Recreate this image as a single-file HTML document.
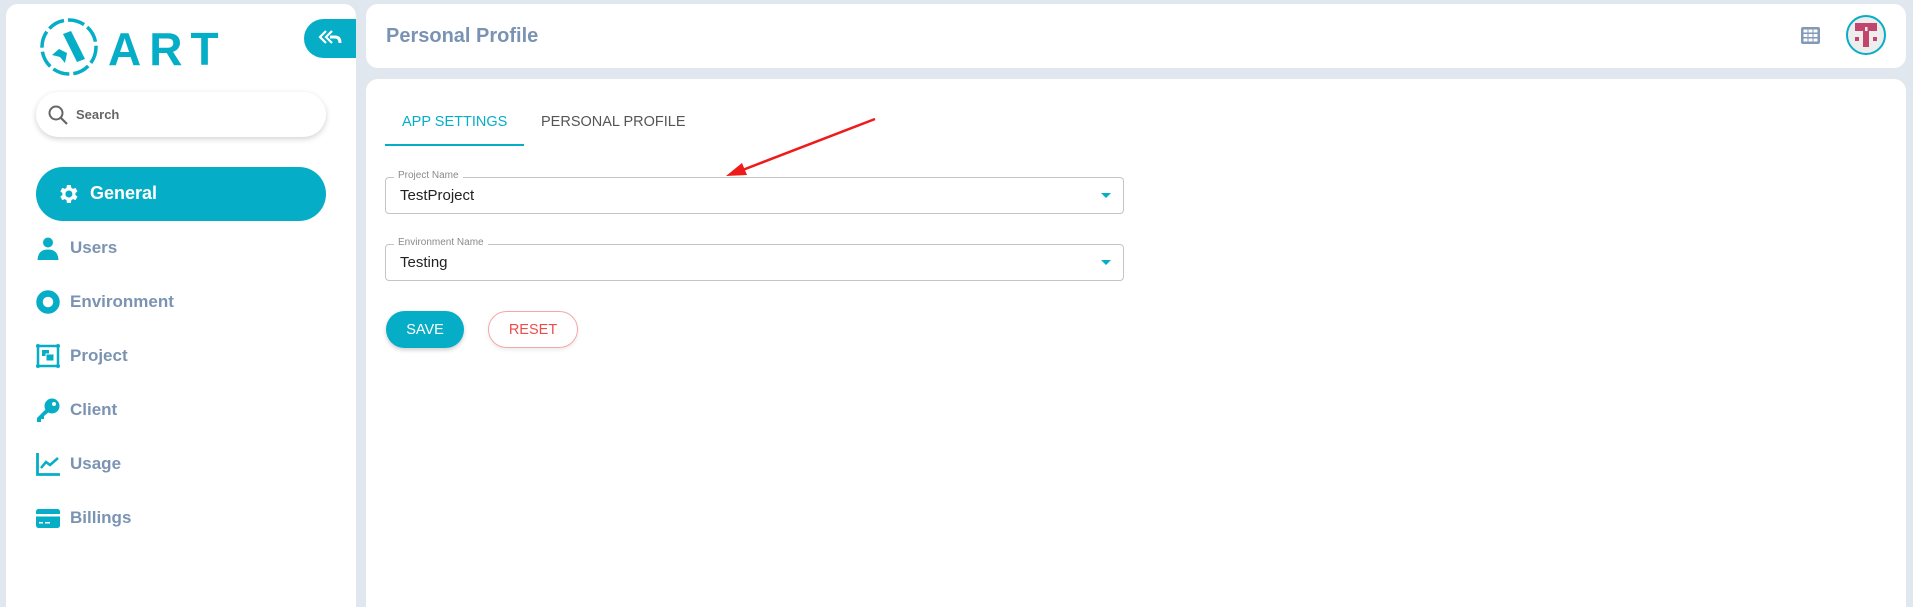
<!DOCTYPE html>
<html><head><meta charset="utf-8"><style>
*{box-sizing:border-box;margin:0;padding:0}
html,body{width:1913px;height:607px;overflow:hidden}
body{background:#e1e7ef;font-family:"Liberation Sans",sans-serif;position:relative}
.abs{position:absolute}
.side{left:6px;top:4px;width:350px;height:603px;background:#fff;border-radius:12px 12px 0 0}
.hdr{left:366px;top:4px;width:1540px;height:64px;background:#fff;border-radius:12px}
.main{left:366px;top:79px;width:1540px;height:528px;background:#fff;border-radius:12px 12px 0 0}
.item{position:absolute;left:36px;height:30px;display:flex;align-items:center;font-weight:bold;font-size:17px;color:#7b93b3}
.item svg{width:24px;height:24px;margin-right:10px}
.sel{position:absolute;left:385px;width:739px;height:37px;border:1px solid #c4c4c4;border-radius:4px}
.sel .lab{position:absolute;left:8px;top:-8px;background:#fff;padding:0 4px;font-size:10px;color:#8a8a8a}
.sel .val{position:absolute;left:14px;top:9px;font-size:15px;color:#222}
.sel .car{position:absolute;right:12px;top:15px;width:0;height:0;border-left:5px solid transparent;border-right:5px solid transparent;border-top:5px solid #06adc6}
</style></head><body>
<div class="abs side"></div>
<div class="abs hdr"></div>
<div class="abs main"></div>

<!-- logo -->
<svg class="abs" style="left:39px;top:17px" width="64" height="64" viewBox="0 0 64 64">
<circle cx="30" cy="30" r="27" fill="none" stroke="#06adc6" stroke-width="3.5" stroke-dasharray="17 4"/>
<path d="M24 17 L32 14 L46 42 L38 45 Z" fill="#06adc6"/>
<path d="M13 38 L20 32 L28 36 L26 46 L21 40 Z" fill="#06adc6"/>
</svg>
<div class="abs" style="left:108px;top:26px;font-size:46px;font-weight:bold;color:#06adc6;letter-spacing:8px;line-height:46px">ART</div>

<!-- collapse -->
<div class="abs" style="left:304px;top:19px;width:52px;height:39px;background:#06adc6;border-radius:20px 0 0 20px"></div>
<svg class="abs" style="left:318px;top:28px" width="24" height="20" viewBox="0 0 24 20"><path d="M8 3 L2 9 L8 15 M14 3 L8 9 L14 15" fill="none" stroke="#fff" stroke-width="2.2"/><path d="M12 9 H17 Q22 9 22 15" fill="none" stroke="#fff" stroke-width="3"/></svg>

<!-- search -->
<div class="abs" style="left:36px;top:92px;width:290px;height:45px;border-radius:23px;background:#fff;box-shadow:0 2px 6px rgba(0,0,0,.18)"></div>
<svg class="abs" style="left:47px;top:104px" width="22" height="22" viewBox="0 0 22 22"><circle cx="9" cy="9" r="6.5" fill="none" stroke="#666" stroke-width="2"/><path d="M14 14 L20 20" stroke="#666" stroke-width="2.2"/></svg>
<div class="abs" style="left:76px;top:107px;font-size:13px;font-weight:bold;color:#666">Search</div>

<!-- general -->
<div class="abs" style="left:36px;top:167px;width:290px;height:54px;border-radius:27px;background:#06adc6"></div>
<svg class="abs" style="left:56px;top:182px" width="24" height="24" viewBox="0 0 24 24"><path fill="#fff" d="M19.4 13a7.5 7.5 0 0 0 0-2l2.1-1.6-2-3.5-2.5 1a7 7 0 0 0-1.7-1L14.9 3h-4l-.4 2.9a7 7 0 0 0-1.7 1l-2.5-1-2 3.5L6.4 11a7.5 7.5 0 0 0 0 2l-2.1 1.6 2 3.5 2.5-1a7 7 0 0 0 1.7 1l.4 2.9h4l.4-2.9a7 7 0 0 0 1.7-1l2.5 1 2-3.5zM12.9 15.5a3.5 3.5 0 1 1 0-7 3.5 3.5 0 0 1 0 7z"/></svg>
<div class="abs" style="left:90px;top:183px;font-size:18px;font-weight:bold;color:#fff">General</div>

<div class="item" style="top:233px"><svg viewBox="0 0 24 24"><circle cx="12" cy="6.5" r="5" fill="#06adc6"/><path d="M1.5 24 Q2 13.5 12 13.5 Q22 13.5 22.5 24Z" fill="#06adc6"/></svg>Users</div>
<div class="item" style="top:287px"><svg viewBox="0 0 24 24"><circle cx="12" cy="12" r="8.5" fill="none" stroke="#06adc6" stroke-width="6.5"/></svg>Environment</div>
<div class="item" style="top:341px"><svg viewBox="0 0 24 24"><rect x="2" y="2" width="20" height="20" fill="none" stroke="#06adc6" stroke-width="2.5"/><circle cx="2" cy="2" r="2" fill="#06adc6"/><circle cx="22" cy="2" r="2" fill="#06adc6"/><circle cx="2" cy="22" r="2" fill="#06adc6"/><circle cx="22" cy="22" r="2" fill="#06adc6"/><rect x="6" y="6" width="7" height="6" fill="#06adc6"/><rect x="10" y="10" width="8" height="7" fill="#06adc6" stroke="#fff" stroke-width="1"/></svg>Project</div>
<div class="item" style="top:395px"><svg viewBox="0 0 24 24"><circle cx="16" cy="8" r="7.5" fill="#06adc6"/><circle cx="18" cy="6" r="2" fill="#fff"/><path d="M10 11 L1 20 V24 H5 V21 H8 V18 L13 14Z" fill="#06adc6"/></svg>Client</div>
<div class="item" style="top:449px"><svg viewBox="0 0 24 24"><path d="M1.5 1 V22.5 H24" fill="none" stroke="#06adc6" stroke-width="2.8"/><path d="M5 16 L10 10 L14 13 L22 6" fill="none" stroke="#06adc6" stroke-width="2.5"/></svg>Usage</div>
<div class="item" style="top:503px"><svg viewBox="0 0 24 24"><rect x="0" y="3" width="24" height="19" rx="2.5" fill="#06adc6"/><rect x="0" y="8" width="24" height="2.5" fill="#fff"/><rect x="3" y="16" width="4" height="1.5" fill="#fff"/><rect x="9" y="16" width="5" height="1.5" fill="#fff"/></svg>Billings</div>

<!-- header -->
<div class="abs" style="left:386px;top:25px;font-size:20px;font-weight:bold;color:#7b93b3">Personal Profile</div>
<svg class="abs" style="left:1801px;top:27px" width="19" height="17" viewBox="0 0 19 17"><rect width="19" height="17" rx="2" fill="#8299b7"/><g fill="#fff"><rect x="2.5" y="2.5" width="4" height="3"/><rect x="7.5" y="2.5" width="4" height="3"/><rect x="12.5" y="2.5" width="4" height="3"/><rect x="2.5" y="7" width="4" height="3"/><rect x="7.5" y="7" width="4" height="3"/><rect x="12.5" y="7" width="4" height="3"/><rect x="2.5" y="11.5" width="4" height="3"/><rect x="7.5" y="11.5" width="4" height="3"/><rect x="12.5" y="11.5" width="4" height="3"/></g></svg>
<svg class="abs" style="left:1845px;top:14px" width="42" height="42" viewBox="0 0 42 42"><circle cx="21" cy="21" r="19" fill="#ededed" stroke="#06adc6" stroke-width="2"/><path fill="#c2456d" d="M10 9 H32 V17 H10Z M18 17 H24 V33 H18Z M10 23 H14 V27 H10Z M28 23 H32 V27 H28Z"/><rect x="20" y="13" width="2.5" height="4" fill="#ededed"/></svg>

<!-- tabs -->
<div class="abs" style="left:402px;top:114px;font-size:14.5px;color:#06adc6">APP SETTINGS</div>
<div class="abs" style="left:541px;top:114px;font-size:14.5px;color:#555">PERSONAL PROFILE</div>
<div class="abs" style="left:385px;top:144px;width:139px;height:2px;background:#06adc6"></div>

<div class="sel" style="top:177px"><span class="lab">Project Name</span><span class="val">TestProject</span><span class="car"></span></div>
<div class="sel" style="top:244px"><span class="lab">Environment Name</span><span class="val">Testing</span><span class="car"></span></div>

<div class="abs" style="left:386px;top:311px;width:78px;height:37px;border-radius:19px;background:#06adc6;color:#fff;font-size:14.5px;display:flex;align-items:center;justify-content:center;box-shadow:0 2px 4px rgba(0,0,0,.2)">SAVE</div>
<div class="abs" style="left:488px;top:311px;width:90px;height:37px;border-radius:19px;border:1px solid #f3a7a7;color:#ef4b4b;font-size:14.5px;display:flex;align-items:center;justify-content:center;box-shadow:0 2px 4px rgba(0,0,0,.08)">RESET</div>

<!-- arrow -->
<svg class="abs" style="left:0;top:0" width="1913" height="607"><line x1="875" y1="119" x2="740" y2="171" stroke="#ef1a1a" stroke-width="2.5"/><path d="M726 176 L742 163 L747 175Z" fill="#ef1a1a"/></svg>
</body></html>
